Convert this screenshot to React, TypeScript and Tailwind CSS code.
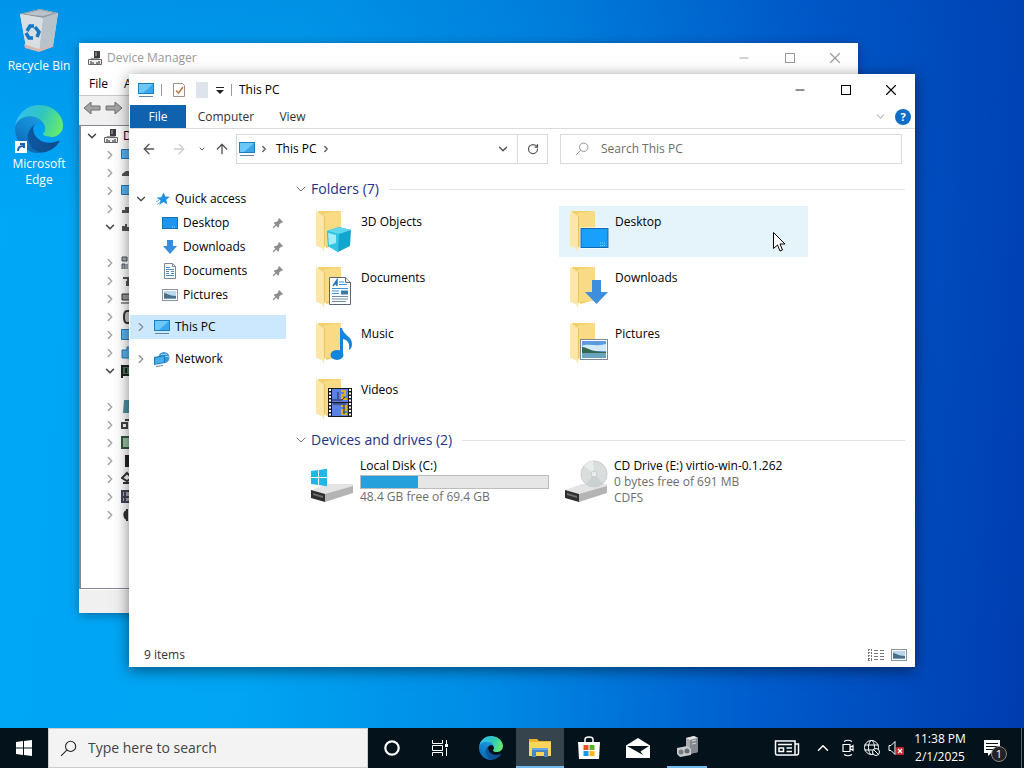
import { useId } from "react";
import type { ReactNode } from "react";
import {
  ArrowLeft,
  ArrowRight,
  ArrowUp,
  ChevronDown,
  ChevronRight,
  ChevronUp,
  Minus,
  RotateCw,
  Square,
  X,
} from "lucide-react";

// ── Small icons ───────────────────────────────────────────────────────

function PcIcon({ className = "h-4 w-[18px]" }: { className?: string }) {
  return (
    <svg viewBox="0 0 18 16" className={`shrink-0 ${className}`}>
      <rect x="1" y="1" width="16" height="11" fill="#1b7fc4" />
      <path d="M2 2h14v9H2z" fill="#3aa9ec" />
      <path d="M2 2h14L6 11H2z" fill="#6cc8f8" />
      <path d="M2 14.5h14" stroke="#5f86a6" />
    </svg>
  );
}

function StarIcon() {
  return (
    <svg viewBox="0 0 16 16" className="h-4 w-4 shrink-0">
      <path
        d="M8.6 1.5l1.6 4 4.6.2-3.6 3 1.2 4.8-3.9-2.6L4.2 14l1.4-4.6L1.5 6.6l4.7-.3z"
        fill="#1e90e0"
      />
      <path d="M1 11l3-2M2 13.5l3-2" stroke="#6bb8ec" />
    </svg>
  );
}

function DesktopIcon() {
  return (
    <svg viewBox="0 0 16 16" className="h-4 w-4 shrink-0">
      <rect x="0.5" y="2.5" width="15" height="11" fill="#1e96f0" stroke="#1273bd" />
      <path d="M10 12h4" stroke="#9ed8ff" strokeDasharray="1 1" />
    </svg>
  );
}

function DownIcon() {
  return (
    <svg viewBox="0 0 16 16" className="h-4 w-4 shrink-0">
      <path d="M5 1h6v6h4l-7 8-7-8h4z" fill="#3a8ddb" />
    </svg>
  );
}

function DocIcon() {
  return (
    <svg viewBox="0 0 16 16" className="h-4 w-4 shrink-0">
      <path d="M2.5.5h8l3 3v12h-11z" fill="#fff" stroke="#7a8794" />
      <path d="M10.5.5v3h3" fill="none" stroke="#7a8794" />
      <path d="M4 4.5h4M4 6.5h8M4 10.5h3M9 10.5h3M4 12.5h8" stroke="#3a8bcb" />
      <path d="M4 8.5h3M9 8.5h3" stroke="#6f7f8d" />
    </svg>
  );
}

function PictureIcon({ className = "h-4 w-4" }: { className?: string }) {
  return (
    <svg viewBox="0 0 16 16" className={`shrink-0 ${className}`}>
      <rect x="0.5" y="2.5" width="15" height="11" fill="#fff" stroke="#8a949e" />
      <path d="M2 4h12v8H2z" fill="#b9d8ef" />
      <path d="M2 6c3 0 5 3 12 3v3H2z" fill="#4a6f88" />
      <path d="M2 11h12v1H2z" fill="#6fa0c4" />
    </svg>
  );
}

function NetworkIcon() {
  return (
    <svg viewBox="0 0 18 16" className="h-4 w-[18px] shrink-0">
      <circle cx="11" cy="6.5" r="5.5" fill="#3b96d6" />
      <path d="M8 3.5c2 1 4-1 6 0M9 5c3 1 5 0 7 1" stroke="#a5d8f8" fill="none" />
      <path d="M1 6l11-2v8L1 14z" fill="#1a78be" />
      <path d="M2 7l9-1.700v6L2 13z" fill="#45aeea" />
      <path d="M3 15.5l7-1" stroke="#5f86a6" />
    </svg>
  );
}

function PinIcon() {
  return (
    <svg viewBox="0 0 12 12" className="h-3 w-3 shrink-0">
      <path
        d="M7 1l4 4-1 1-.8-.2L7 8l.1 1.700-1 1L1.700 6l1-1 1.700.1 2.200-2.200L6.200 2z"
        fill="#8b8f94"
      />
      <path d="M4 8l-3 3" stroke="#8b8f94" strokeWidth="1.2" />
    </svg>
  );
}

function DeviceIcon() {
  return (
    <svg viewBox="0 0 16 16" className="h-4 w-4 shrink-0">
      <path d="M7 1h6v7H7z" fill="#3c3c3c" />
      <path d="M8 2h2v4H8z" fill="#777" />
      <path d="M4 8h8l1 2H3z" fill="#999" />
      <path d="M1.5 9.5h13v5h-13z" fill="#eee" stroke="#666" />
      <path d="M4 11v3M6 12v2M10 12v2M12 11v3" stroke="#222" />
    </svg>
  );
}

function Magnifier({ className }: { className: string }) {
  return (
    <svg viewBox="0 0 16 16" className={`shrink-0 ${className}`}>
      <circle cx="10" cy="6" r="4.8" fill="none" stroke="currentColor" />
      <path d="M6.6 9.4L1 15" stroke="currentColor" />
    </svg>
  );
}

// ── Large folder icons ────────────────────────────────────────────────

function Folder({ children }: { children: ReactNode }) {
  return (
    <svg viewBox="0 0 40 44" className="h-11 w-10 shrink-0">
      <path d="M3 1h23v33l-15 4z" fill="#f3cf6a" />
      <path d="M9 3l17-2v34H9z" fill="#f8db84" />
      <path d="M1 1l8 5v36l-2-4-6-2z" fill="#fde6a6" />
      <path d="M9.500 6v31" stroke="#ebc465" />
      {children}
    </svg>
  );
}

const CUBE = (
  <>
    <path d="M12 21l12-4 12 3-1 16-12 6-10-6z" fill="#12a5cf" />
    <path d="M12 21l12-4 12 3-12 4z" fill="#5fd8ee" />
    <path d="M12 21l12 3-1 18-10-6z" fill="#35c5e4" />
    <path d="M13 23l8 2v8l-7 2z" fill="#a6ecf6" />
  </>
);

const SCREEN = (
  <>
    <rect x="11" y="17.5" width="29" height="21" fill="#fff" />
    <rect x="12" y="18.5" width="27" height="19" fill="#18a0fb" stroke="#126bb0" />
    <path d="M31 33h6M31 35.5h6" stroke="#8ad0ff" strokeDasharray="1 1" />
  </>
);

const PAGE = (
  <>
    <path d="M14.5 11.5h16l5 5v22h-21z" fill="#fff" stroke="#5d6872" />
    <path d="M30.5 11.5v5h5" fill="#e5e9ec" stroke="#5d6872" />
    <path d="M18 20l4-6v6M19.5 18h3" fill="none" stroke="#2477bd" strokeWidth="1.5" />
    <path d="M24 16h5M24 18.5h8M17 22.5h16M17 25h7M17 27.5h7" stroke="#3a94d8" />
    <path d="M17 30.5h16M17 33h16M17 35.5h14" stroke="#6f8ca4" />
    <rect x="26" y="24.5" width="7" height="4" fill="#3d79a8" />
  </>
);

const ARROW = <path d="M23 14h9v12h7L27.5 38 16 26h7z" fill="#3d8fdd" />;

const NOTE = (
  <>
    <path d="M25 6h2c1 7 10 8 10 16 0 3-1 5-3 6 1-8-2-10-6-11v15h-3z" fill="#1485d8" />
    <ellipse cx="22" cy="33" rx="6.5" ry="5" fill="#1485d8" />
  </>
);

const PHOTO = (
  <>
    <rect x="11.5" y="17.5" width="27" height="20" fill="#fff" stroke="#7d8890" />
    <rect x="13" y="19" width="24" height="17" fill="#5d9be0" />
    <path d="M13 24c6-3 12 1 24-2v7H13z" fill="#d3e8f8" />
    <path d="M13 25c5 0 8 5 24 5v3H13z" fill="#33684f" />
    <path d="M13 31h24v5H13z" fill="#6aa5bd" />
  </>
);

const FILM = (
  <>
    <rect x="13" y="10" width="24" height="29" fill="#16181c" />
    <rect x="17" y="11" width="16" height="13" fill="#5b80e6" />
    <rect x="17" y="25" width="16" height="13" fill="#5b80e6" />
    <path d="M15 11v28M35 11v28" stroke="#fff" strokeWidth="2" strokeDasharray="2 1.5" />
    <path d="M26 13h4v4h-3v4h5M26 28h5v4h-4v4h5" stroke="#d9b21f" strokeWidth="2" fill="none" />
    <path d="M17 22h10l3-3M18 26h13M23 14v7M29 27v9" stroke="#2a2a3a" fill="none" />
  </>
);

function DriveIcon({ disc = false }: { disc?: boolean }) {
  return (
    <svg viewBox="0 0 44 44" className="h-11 w-11 shrink-0">
      <path d="M1 32l17-6h25v3l-28 8z" fill="#e4e4e4" />
      <path d="M1 32l14 4v8L1 40z" fill="#2e2e2e" />
      <path d="M3 35l10 3v2L3 37z" fill="#6f6f6f" />
      <path d="M15 36l28-8v7l-28 9z" fill="#b4b4b4" />
      {disc ? (
        <>
          <circle cx="30" cy="16" r="13" fill="#d9dedd" stroke="#c9cdcd" />
          <path d="M30 16L20 8a13 13 0 0 1 9-5z" fill="#e9eeed" />
          <path d="M30 16l9 9a13 13 0 0 1-17 1z" fill="#cbd1d0" />
          <circle cx="30" cy="16" r="3" fill="#e8ecec" stroke="#c6cccb" />
        </>
      ) : (
        <path
          d="M1 13l7-1v7H1zM9 11.9l8-1.200V19H9zM1 20h7v7l-7-1zM9 20h8v8.200l-8-1.200z"
          fill="#1fb6e8"
        />
      )}
    </svg>
  );
}

// ── Desktop and taskbar icons ─────────────────────────────────────────

function EdgeLogo({ className }: { className: string }) {
  const id = useId();
  return (
    <svg viewBox="0 0 256 256" className={className}>
      <defs>
        <linearGradient id={`${id}a`} x1="0" y1="0" x2="1" y2="0">
          <stop offset="0" stopColor="#0c59a4" />
          <stop offset="1" stopColor="#114a8b" />
        </linearGradient>
        <linearGradient id={`${id}b`} x1="0.8" y1="0" x2="0.3" y2="1">
          <stop offset="0" stopColor="#1b9de2" />
          <stop offset="0.5" stopColor="#1384cf" />
          <stop offset="1" stopColor="#0b62b0" />
        </linearGradient>
        <linearGradient id={`${id}c`} x1="0" y1="0.3" x2="1" y2="0.6">
          <stop offset="0" stopColor="#35c1f1" />
          <stop offset="0.5" stopColor="#2fc5c0" />
          <stop offset="1" stopColor="#66eb6e" />
        </linearGradient>
      </defs>
      <path
        d="M231 190.5c-3.4 1.8-6.9 3.4-10.5 4.7a101.7 101.7 0 0 1-35.6 6.4c-47 0-87.9-32.3-87.9-73.8.1-11.4 6.3-21.8 16.3-27.3-42.5 1.8-53.4 46.1-53.4 72 0 73.4 67.6 80.8 82.2 80.8 7.9 0 19.7-2.3 26.8-4.5l1.3-.4a127.7 127.7 0 0 0 66.6-52.8 4 4 0 0 0-5.8-5.1z"
        fill={`url(#${id}a)`}
      />
      <path
        d="M105.7 241.4a79.2 79.2 0 0 1-22.7-21.3 80.7 80.7 0 0 1 29.5-119.6c3.1-1.5 8.4-4.1 15.5-4a32.4 32.4 0 0 1 25.7 13 31.9 31.9 0 0 1 6.3 18.7c0-.2 24.5-79.6-80-79.6-43.9 0-80 41.7-80 78.2a130.2 130.2 0 0 0 12.1 56 128 128 0 0 0 156.4 67.1 75.6 75.6 0 0 1-62.8-8.5z"
        fill={`url(#${id}b)`}
      />
      <path
        d="M152.3 148.9c-.8 1-3.3 2.5-3.3 5.7 0 2.6 1.7 5.1 4.7 7.2 14.4 10 41.5 8.7 41.6 8.7 10.7 0 21.1-2.9 30.3-8.3a61.4 61.4 0 0 0 30.4-52.9c.3-22.4-8-37.3-11.3-43.9C223.5 23.9 177.7 0 128 0A128 128 0 0 0 0 126.2c.5-36.5 36.8-66 80-66 3.5 0 23.5.3 42 10.1 16.3 8.6 24.9 18.9 30.8 29.2 6.2 10.7 7.3 24.1 7.3 29.5 0 5.3-2.7 13.3-7.8 19.9z"
        fill={`url(#${id}c)`}
      />
    </svg>
  );
}

function RecycleBin() {
  return (
    <svg viewBox="0 0 48 48" className="h-12 w-12">
      <path d="M5 7l20-5 18 4-5 33-14 5-13-4z" fill="#cfd8df" />
      <path d="M5 7l20-5 18 4-15 5z" fill="#8f9aa3" />
      <path d="M9 7l16-4 14 3-11 3z" fill="#b9c3ca" />
      <path d="M28 11l15-5-5 33-14 5z" fill="#b7c2cb" />
      <path d="M5 7l23 4-4 33-13-4z" fill="#d8dfe4" />
      <path d="M9 37l15 5 14-4-.3 2L24 45l-14-4z" fill="#d8b8b0" />
      <g fill="none" stroke="#1477c4" strokeWidth="3.5">
        <path d="M12 24l3-5h4" />
        <path d="M20 20l4 5-2 5" />
        <path d="M18 31h-4l-3-5" />
      </g>
    </svg>
  );
}

function ExplorerIcon() {
  return (
    <svg viewBox="0 0 24 24" className="h-6 w-6">
      <path d="M1 4h8l2 2h12v15H1z" fill="#e9b62c" />
      <path d="M1 7h22v14H1z" fill="#fbd55c" />
      <path d="M4 22v-9h16v9h-4v-5H8v5z" fill="#4b86c8" />
      <path d="M4 13h16v2H4z" fill="#6aa6e0" />
    </svg>
  );
}

function StoreIcon() {
  return (
    <svg viewBox="0 0 24 24" className="h-6 w-6">
      <path d="M8 6V3.5Q8 1 12 1t4 2.500V6" fill="none" stroke="#fff" strokeWidth="1.5" />
      <path d="M1 6h22l-1 17H2z" fill="#fff" />
      <path d="M6.5 9h5v5h-5z" fill="#e8502a" />
      <path d="M12.5 9h5v5h-5z" fill="#5fae28" />
      <path d="M6.5 15h5v5h-5z" fill="#1c96e0" />
      <path d="M12.5 15h5v5h-5z" fill="#f4b61c" />
    </svg>
  );
}

function MailIcon() {
  return (
    <svg viewBox="0 0 26 24" className="h-6 w-[26px]">
      <path d="M1 9.500L13 2l12 7.500V22H1z" fill="#fff" />
      <path d="M2 10h22l-8.500 5.500L18 19z" fill="#03121b" />
    </svg>
  );
}

function HardwareIcon() {
  return (
    <svg viewBox="0 0 24 24" className="h-6 w-6">
      <path d="M11 3l8-2 4 2v14l-8 2-4-2z" fill="#a9adb0" />
      <path d="M11 3l8-2 4 2-8 2z" fill="#e3e5e6" />
      <path d="M15 5l8-2v14l-8 2z" fill="#84898d" />
      <path d="M2 13l10-2 4 3v6l-11 2-3-3z" fill="#c9cccd" />
      <circle cx="6" cy="17" r="2.5" fill="#777c80" />
      <circle cx="12" cy="16" r="2.5" fill="#666b6f" />
      <path d="M17 6l4-1M17 9l4-1" stroke="#d7dadb" />
    </svg>
  );
}

// ── Device Manager (behind) ───────────────────────────────────────────

// null is the child row of the opened branch above it
const DEVICE_ROWS: Array<{ open?: boolean; icon: ReactNode } | null> = [
  { icon: <path d="M.5 2.5h14v9H.5z" fill="#5ab4f0" stroke="#2779b5" /> },
  { icon: <path d="M1 9l4-3h9v5H1z" fill="#555" /> },
  { icon: <path d="M.5 2.5h14v9H.5z" fill="#5ab4f0" stroke="#2779b5" /> },
  { icon: <path d="M1 9h3V6h9v6H1z" fill="#555" /> },
  { open: true, icon: <path d="M1 7h3V5h2v3h8v4H1z" fill="#555" /> },
  null,
  { icon: <path d="M1 2h5v4H1zM1 14V9h3v5M6 14V9" fill="#aaa" stroke="#456" /> },
  { icon: <path d="M2 4h10v4H6V6H2zM5 8h3v5H5z" fill="#555" /> },
  { icon: <path d="M1 3h12v6H1zM0 12h14" fill="#999" stroke="#333" /> },
  { icon: <path d="M6 2C3 2 3 6 3 8s0 6 3 6h6V2z" fill="#ccc" stroke="#333" strokeWidth="2" /> },
  { icon: <path d="M.5 2.5h14v10H.5z" fill="#5ab4f0" stroke="#2779b5" /> },
  { icon: <path d="M1 5h5V2h8v11H1z" fill="#5ab4f0" stroke="#2779b5" /> },
  { open: true, icon: <path d="M1 2v13M1 3h12v9H1zM5 5v5" fill="#487a55" stroke="#222" strokeWidth="2" /> },
  null,
  { icon: <path d="M3 1h11v13H2z" fill="#4e93a5" /> },
  { icon: <path d="M1 6h5v5H1zM4 3h8v6" fill="none" stroke="#444" strokeWidth="2" /> },
  { icon: <path d="M1 2h12v11H1z" fill="#9ac3a5" stroke="#35553d" strokeWidth="2" /> },
  { icon: <path d="M4 2h5v12H4z" fill="#222" /> },
  { icon: <path d="M1 7l5-5 5 5-5 3zM2 12h8" fill="none" stroke="#333" strokeWidth="2" /> },
  { icon: <path d="M1 2h11v11H1zM4 3v9M1 8h9" fill="#aab" stroke="#445" strokeWidth="2" /> },
  { icon: <path d="M6 2v12M6 4c-4 1-3 7 0 8" fill="#333" stroke="#333" strokeWidth="2" /> },
];

function DeviceManagerWindow() {
  return (
    <section className="absolute top-[43px] right-[166px] bottom-[115px] left-[79px] flex flex-col bg-[#f0f0f0] shadow-[0_2px_10px_rgba(0,0,0,0.35)]">
      <header className="flex h-[30px] shrink-0 items-center bg-white pl-2 text-[#999]">
        <DeviceIcon />
        <h2 className="flex-1 pl-1 text-[12px] leading-4">Device Manager</h2>
        <WindowButtons />
      </header>
      <div className="flex h-[22px] shrink-0 items-center gap-4 bg-white pl-[10px] text-[12px] leading-4">
        <button>File</button>
        <button>A</button>
      </div>
      <div className="flex h-7 shrink-0 items-center gap-1 border-t border-[#c9c9c9] pb-1 pl-1">
        <BlockArrow />
        <BlockArrow className="rotate-180" />
      </div>
      <div className="mt-[2px] flex-1 overflow-hidden border border-l-2 border-[#828790] bg-white pl-1">
        <div className="flex h-5 items-center gap-1 text-[12px] leading-4">
          <ChevronDown size={14} strokeWidth={2.5} className="text-[#404040]" />
          <DeviceIcon />
          <span>D</span>
        </div>
        <ul>
          {DEVICE_ROWS.map((row, i) => (
            <li key={i} className="flex h-[18px] items-center gap-1 pl-[18px]">
              {row && (
                <>
                  {row.open ? (
                    <ChevronDown size={14} strokeWidth={2.5} className="text-[#404040]" />
                  ) : (
                    <ChevronRight size={14} strokeWidth={2.5} className="text-[#a6a6a6]" />
                  )}
                  <svg viewBox="0 0 16 16" className="h-4 w-4">
                    {row.icon}
                  </svg>
                </>
              )}
            </li>
          ))}
        </ul>
      </div>
      <div className="h-6 shrink-0 border-t border-white" />
    </section>
  );
}

function BlockArrow({ className = "" }: { className?: string }) {
  return (
    <button aria-label="Navigate">
      <svg viewBox="0 0 18 16" className={`h-4 w-[18px] ${className}`}>
        <path d="M1 8l7-6v4h9v4H8v4z" fill="#a3a3a3" stroke="#6e6e6e" />
      </svg>
    </button>
  );
}

function WindowButtons() {
  return (
    <div className="flex">
      <button aria-label="Minimize" className="flex w-[46px] items-center justify-center">
        <Minus size={14} strokeWidth={1.5} />
      </button>
      <button aria-label="Maximize" className="flex w-[45px] items-center justify-center">
        <svg viewBox="0 0 10 10" className="h-[10px] w-[10px]">
          <rect x="0.5" y="0.5" width="9" height="9" fill="none" stroke="currentColor" />
        </svg>
      </button>
      <button aria-label="Close" className="flex w-[46px] items-center justify-center">
        <X size={18} strokeWidth={1.5} />
      </button>
    </div>
  );
}

// ── File Explorer ─────────────────────────────────────────────────────

const QUICK_ACCESS = [
  { label: "Desktop", icon: <DesktopIcon /> },
  { label: "Downloads", icon: <DownIcon /> },
  { label: "Documents", icon: <DocIcon /> },
  { label: "Pictures", icon: <PictureIcon /> },
];

const FOLDERS = [
  { label: "3D Objects", art: CUBE },
  { label: "Desktop", art: SCREEN, hover: true },
  { label: "Documents", art: PAGE },
  { label: "Downloads", art: ARROW },
  { label: "Music", art: NOTE },
  { label: "Pictures", art: PHOTO },
  { label: "Videos", art: FILM },
];

const DISK = { total: 69.4, free: 48.4 };

function Sidebar() {
  return (
    <nav className="flex w-[156px] shrink-0 flex-col gap-2 pt-[18px] text-[12px] leading-4">
      <div>
        <button className="flex h-6 w-full items-center pl-1">
          <ChevronDown size={14} strokeWidth={2} className="text-[#404040]" />
          <span className="flex items-center gap-1 pl-[7px]">
            <StarIcon />
            Quick access
          </span>
        </button>
        {QUICK_ACCESS.map((item) => (
          <button key={item.label} className="flex h-6 w-full items-center gap-[5px] pr-[2px] pl-8">
            {item.icon}
            <span className="flex-1 text-left">{item.label}</span>
            <PinIcon />
          </button>
        ))}
      </div>
      <button className="flex h-6 items-center bg-[#cce8ff] pl-1">
        <ChevronRight size={14} strokeWidth={2} className="text-[#8a8a8a]" />
        <span className="flex items-center gap-1 pl-[5px]">
          <PcIcon />
          This PC
        </span>
      </button>
      <button className="flex h-6 items-center pl-1">
        <ChevronRight size={14} strokeWidth={2} className="text-[#8a8a8a]" />
        <span className="flex items-center gap-1 pl-[5px]">
          <NetworkIcon />
          Network
        </span>
      </button>
    </nav>
  );
}

function GroupHeading({ children }: { children: ReactNode }) {
  return (
    <h3 className="flex h-6 items-center gap-[2px] text-[14px] text-[#1e3287]">
      <ChevronDown size={16} strokeWidth={1.5} className="text-[#777]" />
      {children}
      <span className="ml-2 h-px flex-1 bg-[#e2e2e2]" />
    </h3>
  );
}

function ExplorerWindow() {
  return (
    <section className="absolute top-[74px] right-[109px] bottom-[61px] left-[129px] flex flex-col bg-white pl-px text-[12px] leading-4 text-black shadow-[0_3px_14px_rgba(0,0,0,0.5)]">
      {/* Title bar */}
      <header className="flex h-[31px] shrink-0 items-center pr-px pl-[7px]">
        <PcIcon />
        <span className="mx-[6px] h-3 w-px bg-[#9a9a9a]" />
        <button aria-label="Properties" className="ml-1">
          <svg viewBox="0 0 14 16" className="h-4 w-[14px]">
            <path d="M1.5 1.5h9l2 2v11h-11z" fill="#fff" stroke="#a58f83" />
            <path d="M4 8.5l2.500 2.500L11 5" fill="none" stroke="#c17a45" strokeWidth="1.5" />
          </svg>
        </button>
        <span className="ml-[10px] h-4 w-3 bg-[#dfe3ec]" />
        <button aria-label="Customize toolbar" className="ml-2">
          <svg viewBox="0 0 8 8" className="h-2 w-2">
            <path d="M0 1.5h8" stroke="#222" />
            <path d="M0 4h8L4 8z" fill="#222" />
          </svg>
        </button>
        <span className="mx-[7px] h-3 w-px bg-[#9a9a9a]" />
        <h1 className="flex-1">This PC</h1>
        <WindowButtons />
      </header>

      {/* Ribbon tabs */}
      <div className="flex h-6 shrink-0 items-center border-b border-[#dadbdc] pr-1 text-[#333]">
        <button className="h-full w-14 bg-[#0f62ae] text-white">File</button>
        <button className="w-20">Computer</button>
        <button className="w-[53px]">View</button>
        <span className="flex-1" />
        <ChevronDown size={13} className="mr-2 text-[#bbb]" />
        <button
          aria-label="Help"
          className="flex h-4 w-4 items-center justify-center rounded-full bg-[#0f6fc6] text-[11px] font-bold text-white"
        >
          ?
        </button>
      </div>

      {/* Address row */}
      <div className="flex h-10 shrink-0 items-center pr-[13px] pl-[11px] text-[#555]">
        <button aria-label="Back">
          <ArrowLeft size={16} />
        </button>
        <button aria-label="Forward" className="ml-[14px] text-[#ccc]">
          <ArrowRight size={16} />
        </button>
        <button aria-label="Recent" className="ml-[11px]">
          <ChevronDown size={8} strokeWidth={3} />
        </button>
        <button aria-label="Up" className="ml-2">
          <ArrowUp size={16} />
        </button>
        <div className="ml-[6px] flex h-[30px] flex-1 items-center border border-[#d9d9d9] pl-px">
          <PcIcon />
          <ChevronRight size={10} strokeWidth={3} className="mx-[3px]" />
          <span className="px-1 text-black">This PC</span>
          <ChevronRight size={10} strokeWidth={3} />
          <span className="flex-1" />
          <ChevronDown size={14} strokeWidth={2.5} className="mr-[7px]" />
          <button
            aria-label="Refresh"
            className="flex h-full w-[30px] items-center justify-center border-l border-[#d9d9d9]"
          >
            <RotateCw size={12} strokeWidth={2.5} />
          </button>
        </div>
        <label className="ml-3 flex h-[30px] w-[342px] items-center gap-3 border border-[#d9d9d9] pl-[14px]">
          <Magnifier className="h-[14px] w-[14px] text-[#888]" />
          <input
            type="text"
            aria-label="Search This PC"
            placeholder="Search This PC"
            className="w-full bg-transparent outline-none placeholder:text-[#6d6d6d]"
          />
        </label>
      </div>

      {/* Body */}
      <div className="flex min-h-0 flex-1">
        <Sidebar />
        <main className="flex-1 pt-2 pr-[10px] pl-[7px]">
          <GroupHeading>Folders (7)</GroupHeading>
          <div className="grid grid-cols-[249px_249px] gap-[5px] pt-[5px] pb-[3px] pl-3">
            {FOLDERS.map((folder) => (
              <button
                key={folder.label}
                className={`flex h-[51px] gap-[6px] pt-1 pl-[10px] text-left ${folder.hover ? "bg-[#e5f3fb]" : ""}`}
              >
                <Folder>{folder.art}</Folder>
                <span className="pt-1">{folder.label}</span>
              </button>
            ))}
          </div>

          <GroupHeading>Devices and drives (2)</GroupHeading>
          <div className="grid grid-cols-[249px_249px] gap-[5px] pt-[6px] pl-3">
            <div className="flex gap-[6px] pl-[5px]">
              <DriveIcon />
              <div className="flex-1 pr-[5px]">
                <p>Local Disk (C:)</p>
                <div
                  role="progressbar"
                  aria-label="Used space"
                  className="mt-px h-[14px] border border-[#bcbcbc] bg-[#e6e6e6]"
                >
                  <div
                    className="h-full bg-[#26a0da]"
                    style={{ width: `${100 - (DISK.free / DISK.total) * 100}%` }}
                  />
                </div>
                <p className="text-[#6d6d6d]">
                  {DISK.free} GB free of {DISK.total} GB
                </p>
              </div>
            </div>
            <div className="flex gap-[6px] pl-[5px]">
              <DriveIcon disc />
              <div>
                <p>CD Drive (E:) virtio-win-0.1.262</p>
                <p className="text-[#6d6d6d]">0 bytes free of 691 MB</p>
                <p className="text-[#6d6d6d]">CDFS</p>
              </div>
            </div>
          </div>
        </main>
      </div>

      {/* Status bar */}
      <footer className="flex h-6 shrink-0 items-center gap-[6px] pr-2 pl-[14px] text-[#333]">
        <span className="flex-1">9 items</span>
        <button aria-label="Details view">
          <svg viewBox="0 0 18 14" className="h-[14px] w-[18px]">
            <path
              d="M1.5 1v12M4.5 1v12M1 1.5h4M1 4.5h4M1 7.5h4M1 10.5h4M1 12.5h4"
              stroke="#777"
              strokeDasharray="2 1"
            />
            <path d="M7 2.5h11M7 5.5h11M7 8.5h11M7 11.5h11" stroke="#777" strokeDasharray="4 2" />
          </svg>
        </button>
        <button aria-label="Large icons view">
          <PictureIcon className="h-4 w-4" />
        </button>
      </footer>
    </section>
  );
}

// ── Taskbar ───────────────────────────────────────────────────────────

function TaskButton({
  label,
  className = "",
  children,
}: {
  label: string;
  className?: string;
  children: ReactNode;
}) {
  return (
    <button
      aria-label={label}
      className={`flex h-10 w-12 shrink-0 items-center justify-center ${className}`}
    >
      {children}
    </button>
  );
}

function Taskbar() {
  return (
    <footer className="flex h-10 shrink-0 items-center bg-[#03121b] text-white">
      <TaskButton label="Start">
        <svg viewBox="0 0 16 16" className="h-4 w-4">
          <path d="M0 2l7-1v6.500H0zM8 .9L16 0v7.500H8zM0 8.500h7V15l-7-1zM8 8.500h8V16l-8-1z" fill="#fff" />
        </svg>
      </TaskButton>
      <label className="flex h-10 w-80 items-center gap-[11px] border border-[#ccc] bg-[#f3f3f3] pl-[11px] text-[#222]">
        <Magnifier className="h-[17px] w-[17px]" />
        <input
          type="text"
          aria-label="Type here to search"
          placeholder="Type here to search"
          className="w-full bg-transparent text-[14px] leading-5 outline-none placeholder:text-[#444]"
        />
      </label>
      <TaskButton label="Cortana">
        <svg viewBox="0 0 16 16" className="h-4 w-4">
          <circle cx="8" cy="8" r="6.7" fill="none" stroke="#fff" strokeWidth="2.2" />
        </svg>
      </TaskButton>
      <TaskButton label="Task view">
        <svg viewBox="0 0 18 18" className="h-[18px] w-[18px]">
          <path d="M1.5 1v3.500h10V1M1.5 17v-3.500h10V17M1.5 6.500h10v5h-10z" fill="none" stroke="#fff" />
          <path d="M15.5 1v4M15.5 9v8" stroke="#fff" />
          <path d="M14 5h3v3h-3z" fill="#fff" />
        </svg>
      </TaskButton>
      <div className="ml-[3px] flex gap-px">
        <TaskButton label="Microsoft Edge">
          <EdgeLogo className="h-6 w-6" />
        </TaskButton>
        <TaskButton label="File Explorer" className="border-b-2 border-[#76b9ed] bg-[#36454d]">
          <ExplorerIcon />
        </TaskButton>
        <TaskButton label="Microsoft Store">
          <StoreIcon />
        </TaskButton>
        <TaskButton label="Mail">
          <MailIcon />
        </TaskButton>
        <TaskButton label="Device Manager" className="flex-col">
          <span className="flex flex-1 items-center">
            <HardwareIcon />
          </span>
          <span className="h-[2px] w-10 bg-[#76b9ed]" />
        </TaskButton>
      </div>

      {/* Tray */}
      <div className="ml-auto flex h-full items-center">
        <button aria-label="News" className="mr-[14px]">
          <svg viewBox="0 0 26 18" className="h-[18px] w-[26px]" fill="none" stroke="#fff" strokeWidth="1.5">
            <path d="M1.5 2h19.500v14H3Q1.5 16 1.5 14zM21 5h3.500v9q0 2-2 2H20" />
            <path d="M4 5.500h14M12.500 9h5.500M12.500 12.500h5.500M5 9h4.500v3.500H5z" />
          </svg>
        </button>
        <button aria-label="Hidden icons" className="mr-2">
          <ChevronUp size={18} strokeWidth={2} />
        </button>
        <button aria-label="Meet Now" className="mr-2">
          <svg viewBox="0 0 16 18" className="h-[18px] w-4" fill="none" stroke="#fff" strokeWidth="1.2">
            <path d="M3 5.500h7v7H3zM10 8.500l3-2v5l-3-2zM4 2.500q4-2.500 8 0M4 15.500q4 2.500 8 0" />
          </svg>
        </button>
        <button aria-label="Network" className="mr-2">
          <svg viewBox="0 0 16 16" className="h-4 w-4" fill="none" stroke="#fff">
            <circle cx="7.5" cy="7.5" r="7" />
            <ellipse cx="7.5" cy="7.5" rx="3" ry="7" />
            <path d="M.5 5h14M.5 10h14" />
            <circle cx="12" cy="12" r="3.5" fill="#03121b" />
            <path d="M9.5 9.500l5 5" />
          </svg>
        </button>
        <button aria-label="Volume muted" className="mr-[11px]">
          <svg viewBox="0 0 16 16" className="h-4 w-4">
            <path d="M1 5.500h2l4-4v13l-4-4H1z" fill="none" stroke="#fff" />
            <rect x="8" y="7" width="8" height="8" rx="1" fill="#c4262e" />
            <path d="M10 9l4 4M14 9l-4 4" stroke="#fff" strokeWidth="1.3" />
          </svg>
        </button>
        <div className="flex w-[50px] flex-col items-center text-[12px] leading-[18px] whitespace-nowrap">
          <p>11:38 PM</p>
          <p>2/1/2025</p>
        </div>
        <button aria-label="Notifications" className="relative mr-5 ml-[18px]">
          <svg viewBox="0 0 18 18" className="h-[18px] w-[18px]">
            <path d="M1 1h16v13H8l-3 3v-3H1z" fill="#fff" />
            <path d="M3 4.500h12M3 7.500h12M3 10.500h8" stroke="#03121b" />
          </svg>
          <span className="absolute top-[7px] left-2 flex h-4 w-4 items-center justify-center rounded-full border border-[#888] bg-[#222] text-[11px] leading-3">
            1
          </span>
        </button>
        <span className="mr-[2px] h-full w-px bg-[#5d676d]" />
      </div>
    </footer>
  );
}

// ── Desktop ───────────────────────────────────────────────────────────

export default function App() {
  return (
    <div className="flex h-screen flex-col overflow-hidden font-['Open_Sans','Noto_Sans',sans-serif]">
      <div className="relative flex-1 bg-[linear-gradient(180deg,rgba(0,60,170,0.18)_0%,rgba(0,60,170,0)_30%),linear-gradient(95deg,#00a8f8_0%,#00a4f2_28%,#008ce6_50%,#005ccc_75%,#003cb0_100%)]">
        <div className="flex w-[78px] flex-col gap-[31px] pt-[7px] text-center text-[12px] leading-4 text-white [text-shadow:0_1px_2px_#000,1px_1px_2px_#000]">
          <button className="flex flex-col items-center gap-[3px] whitespace-nowrap">
            <RecycleBin />
            Recycle Bin
          </button>
          <button className="flex flex-col items-center gap-[3px]">
            <span className="relative">
              <EdgeLogo className="h-12 w-12" />
              <svg viewBox="0 0 12 12" className="absolute bottom-0 left-0 h-3 w-3">
                <rect width="12" height="12" fill="#fff" />
                <path d="M3 10c0-4 2-5 5-5M5 3h4v4" fill="none" stroke="#1a5fb0" strokeWidth="2" />
              </svg>
            </span>
            Microsoft Edge
          </button>
        </div>

        <DeviceManagerWindow />
        <ExplorerWindow />

        <svg viewBox="0 0 12 20" className="absolute top-[232px] left-[773px] h-5 w-3">
          <path d="M.5.5v16l4-3.500 2.500 6 2.500-1-2.500-6h5z" fill="#fff" stroke="#000" />
        </svg>
      </div>
      <Taskbar />
    </div>
  );
}
